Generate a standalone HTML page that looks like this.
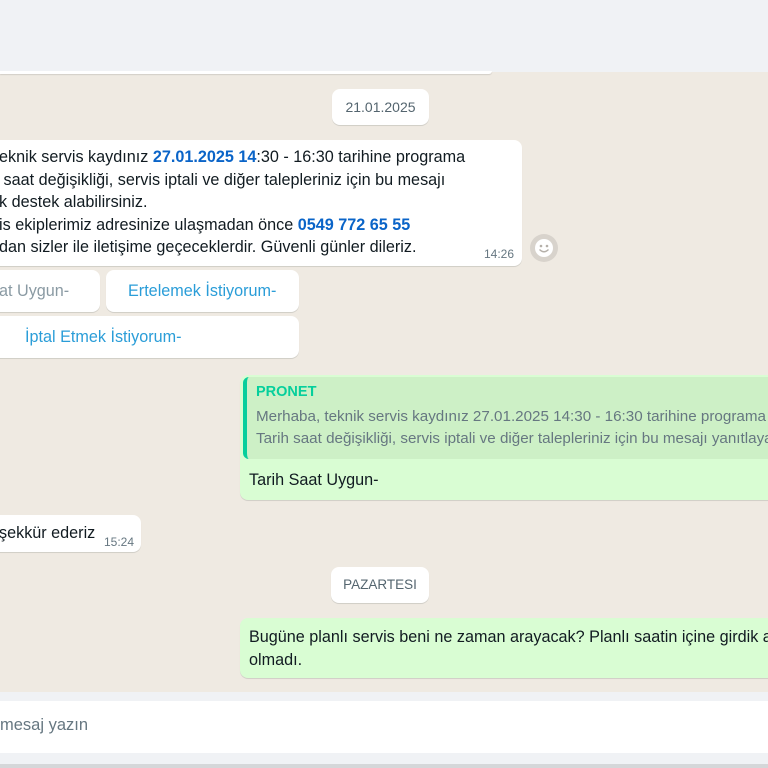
<!DOCTYPE html>
<html><head><meta charset="utf-8"><style>
body{margin:0;width:768px;height:768px;overflow:hidden;background:#efeae2;font-family:"Liberation Sans",sans-serif;position:relative;color:#111b21}
.a{position:absolute}
.top{left:0;top:0;width:768px;height:72px;background:#f0f2f5}
.b{background:#fff;border-radius:8px;box-shadow:0 1px 0.5px rgba(11,20,26,.13)}
.g{background:#d9fdd3;border-radius:8px;box-shadow:0 1px 0.5px rgba(11,20,26,.13)}
.t{font-size:16.2px;white-space:nowrap;line-height:22.5px}
.blue{color:#0a64c8;font-weight:bold}
.btn{color:#2a9dd8;font-size:16.2px;line-height:42px;white-space:nowrap}
.time{font-size:12px;color:#667781}
</style></head><body>
<div class="a top"></div>
<div class="a" style="left:0;top:71px;width:492px;height:3px;background:#fff;border-radius:0 0 6px 0;box-shadow:0 1px 1px rgba(0,0,0,.12)"></div>
<div class="a b" style="left:332px;top:89px;width:97px;height:36px;text-align:center;line-height:36px;font-size:14px;color:#54656f">21.01.2025</div>
<div class="a b" style="left:-10px;top:140px;width:532px;height:126px"></div>
<div class="a t" style="left:-1px;top:146px">eknik servis kaydınız <span class="blue">27.01.2025 14</span>:30 - 16:30 tarihine programa<br>&nbsp;saat değişikliği, servis iptali ve diğer talepleriniz için bu mesajı<br>k destek alabilirsiniz.<br>is ekiplerimiz adresinize ulaşmadan önce <span class="blue">0549 772 65 55</span><br>dan sizler ile iletişime geçeceklerdir. Güvenli günler dileriz.</div>
<div class="a time" style="left:484px;top:247px">14:26</div>
<svg class="a" style="left:529px;top:233px" width="30" height="30" viewBox="0 0 30 30"><circle cx="15" cy="15" r="14" fill="#d8d3cc"/><circle cx="15" cy="15" r="9" fill="#fff"/><circle cx="12" cy="13" r="1.3" fill="#b5b0a9"/><circle cx="18" cy="13" r="1.3" fill="#b5b0a9"/><path d="M10.5 16.5 Q15 21 19.5 16.5" stroke="#b5b0a9" stroke-width="1.4" fill="none"/></svg>
<div class="a b btn" style="left:-10px;top:270px;width:110px;height:42px;color:#8a9aa3"><span class="a" style="left:9px">at Uygun-</span></div>
<div class="a b btn" style="left:106px;top:270px;width:193px;height:42px"><span class="a" style="left:22px">Ertelemek İstiyorum-</span></div>
<div class="a b btn" style="left:-10px;top:316px;width:309px;height:42px"><span class="a" style="left:35px">İptal Etmek İstiyorum-</span></div>
<div class="a g" style="left:240px;top:375px;width:540px;height:125px"></div>
<div class="a" style="left:243px;top:377px;width:530px;height:82px;background:#cdf0c6;border-left:4px solid #06cf9c;border-radius:6px"></div>
<div class="a" style="left:256px;top:384px;font-size:14.5px;font-weight:bold;color:#06cf9c">PRONET</div>
<div class="a t" style="left:256px;top:406px;color:#667781;font-size:15.2px;line-height:22px">Merhaba, teknik servis kaydınız 27.01.2025 14:30 - 16:30 tarihine programa a<br>Tarih saat değişikliği, servis iptali ve diğer talepleriniz için bu mesajı yanıtlaya</div>
<div class="a t" style="left:249px;top:469px">Tarih Saat Uygun-</div>
<div class="a b" style="left:-10px;top:515px;width:151px;height:37px"></div>
<div class="a t" style="left:-1px;top:522px">şekkür ederiz</div>
<div class="a time" style="left:104px;top:535px">15:24</div>
<div class="a b" style="left:331px;top:567px;width:98px;height:36px;text-align:center;line-height:36px;font-size:13.5px;color:#54656f">PAZARTESI</div>
<div class="a g" style="left:240px;top:618px;width:540px;height:60px"></div>
<div class="a t" style="left:249px;top:626px">Bugüne planlı servis beni ne zaman arayacak? Planlı saatin içine girdik a<br>olmadı.</div>
<div class="a" style="left:0;top:692px;width:768px;height:76px;background:#f0f2f5"></div>
<div class="a" style="left:0;top:701px;width:768px;height:52px;background:#fff"></div>
<div class="a" style="left:0;top:716px;font-size:16.5px;color:#667781">mesaj yazın</div>
<div class="a" style="left:0;top:764px;width:768px;height:4px;background:#d5d7d9"></div>
</body></html>
